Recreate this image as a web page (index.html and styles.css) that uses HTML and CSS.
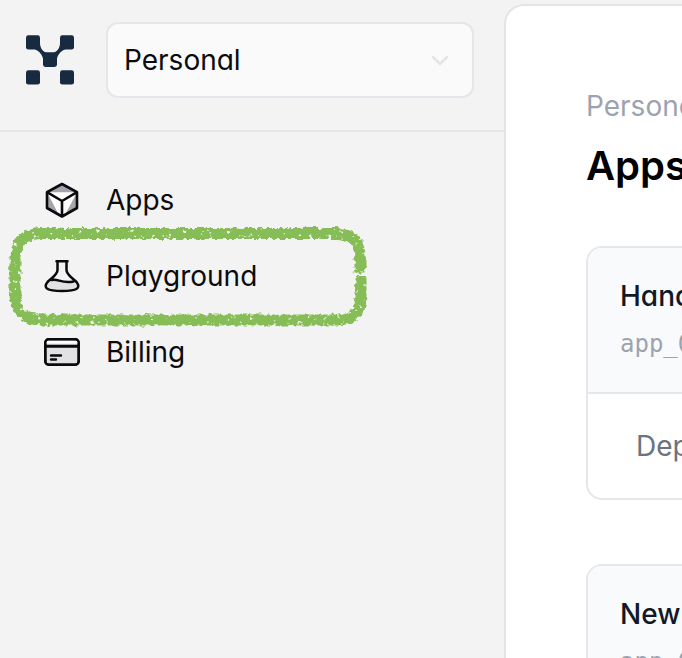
FILE: index.html
```html
<!DOCTYPE html>
<html lang="en">
<head>
<meta charset="utf-8">
<title>Apps</title>
<link rel="stylesheet" href="styles.css">
</head>
<body>
<div class="shell">
  <aside class="sidebar">
    <header class="top">
      <svg class="logo" viewBox="0 0 48 50" fill="#172a40">
        <rect x="0" y="0.300" width="14" height="14.300" rx="2.400"/>
        <rect x="34" y="0.300" width="14" height="14.300" rx="2.400"/>
        <rect x="17" y="17.600" width="14" height="14.300" rx="2.400"/>
        <rect x="0" y="35.300" width="14" height="14.300" rx="2.400"/>
        <rect x="34" y="35.300" width="14" height="14.300" rx="2.400"/>
        <path d="M14 8C14 12.500 16.500 17.300 21 17.500H27C31.500 17.300 34 12.500 34 8L39 14.500C35 15.800 32 19.500 31 23.500H17C16 19.500 13 15.800 9 14.500Z"/>
      </svg>
      <div class="select">
        <span>Personal</span>
        <svg class="chevron" viewBox="0 0 18 12" fill="none" stroke="#e4e5e7" stroke-width="2.600" stroke-linecap="round" stroke-linejoin="round"><path d="M2 3 9 10 16 3"/></svg>
      </div>
    </header>
    <nav class="nav">
      <a class="item">
        <svg class="icon" viewBox="0 0 36 36" stroke-linejoin="round">
          <path d="M18 2 33 10.200V26L18 34.500 3 26V10.200Z" fill="#fff"/>
          <path d="M18 2 33 10.200H3ZM3 10.200V26L15 33ZM33 10.200V26L21 33Z" fill="#a5a5ad"/>
          <path d="M18 2 33 10.200V26L18 34.500 3 26V10.200ZM3 10.200 18 19 33 10.200M18 19V34" fill="none" stroke="#0b0b0d" stroke-width="2.600"/>
        </svg>
        <span>Apps</span>
      </a>
      <a class="item">
        <svg class="icon" viewBox="0 0 36 36" fill="none" stroke="#0b0b0d" stroke-width="2.500" stroke-linecap="round" stroke-linejoin="round">
          <path d="M7 22.500C14 19 17 25.500 29 23.500L34 28C35 33 30 33 18 33S1 33 2 28Z" fill="#e2e2e5" stroke="none"/>
          <path d="M12.500 3.200H23.500M13.500 3.500V12C13.500 17 8 19.500 3.500 24C-1 30 2.500 33 18 33S37 30 32.500 24C28 19.500 22.500 17 22.500 12V3.500M7.500 22C14 20 17 26 29.500 23.500"/>
        </svg>
        <span>Playground</span>
      </a>
      <a class="item">
        <svg class="icon" viewBox="0 0 36 36" fill="none" stroke="#0b0b0d" stroke-width="2.400" stroke-linecap="round">
          <rect x="1.300" y="5.200" width="33.400" height="25.600" rx="3.500" fill="#e2e2e5"/>
          <path d="M2.400 8H33.600" stroke="#fff" stroke-width="3"/>
          <rect x="1.300" y="5.200" width="33.400" height="25.600" rx="3.500"/>
          <path d="M2 12.200H34" stroke-width="3"/>
          <path d="M7 21.500H17M7 25.500H12"/>
        </svg>
        <span>Billing</span>
      </a>
    </nav>
    <svg class="marker" viewBox="0 0 376 120">
      <filter id="brush" filterUnits="userSpaceOnUse" x="0" y="0" width="376" height="120" color-interpolation-filters="sRGB">
        <feTurbulence type="fractalNoise" baseFrequency="0.22" numOctaves="2" seed="8" result="n"/>
        <feDisplacementMap in="SourceGraphic" in2="n" scale="6.500" xChannelSelector="R" yChannelSelector="G" result="rough"/>
        <feColorMatrix in="n" type="matrix" values="0 0 0 0 0  0 0 0 0 0  0 0 0 0 0  0 0 -9 0 7" result="holes"/>
        <feComposite in="rough" in2="holes" operator="in"/>
      </filter>
      <path d="M360 56.500V42Q360 17.500 336 17.500H42Q15 17.500 15 44V79Q15 104 42 104H336Q361 104 361 80V60" fill="none" stroke="#87bd56" stroke-width="11" filter="url(#brush)"/>
    </svg>
  </aside>
  <main class="panel">
    <div class="crumb">Personal</div>
    <h1>Apps</h1>
    <section class="card">
      <div class="head"><h2>Hand</h2><code>app_0</code></div>
      <div class="body">Dep</div>
    </section>
    <section class="card">
      <div class="head"><h2>New</h2><code>app_0</code></div>
    </section>
  </main>
</div>
</body>
</html>
```
FILE: styles.css
```css
* { box-sizing: border-box; }
body {
  margin: 0;
  height: 658px;
  overflow: hidden;
  background: #f3f3f3;
  color: #0b0b0d;
  font: 28px/40px Inter, "Liberation Sans", sans-serif;
  font-feature-settings: "cv11";
}
.shell { display: flex; height: 658px; overflow: hidden; }
.sidebar { position: relative; flex: 0 0 504px; }
.top {
  display: flex;
  align-items: flex-start;
  height: 132px;
  padding: 22px 30px 0 26px;
  border-bottom: 2px solid #e5e5e6;
}
.logo { width: 48px; height: 50px; margin: 13px 32px 0 0; }
.select {
  flex: 1;
  display: flex;
  align-items: center;
  justify-content: space-between;
  height: 76px;
  padding: 0 23px 0 16px;
  border: 2px solid #e4e6eb;
  border-radius: 12px;
  background: #fafafa;
}
.chevron { width: 18px; height: 12px; }
.nav { padding: 30px 44px; }
.item { display: flex; align-items: center; gap: 26px; height: 76px; }
.icon { width: 36px; height: 36px; }
.marker {
  position: absolute;
  left: 0;
  top: 216px;
  width: 376px;
  height: 120px;
}
.panel {
  flex: 1;
  min-width: 0;
  height: 654px;
  margin-top: 4px;
  padding: 80px 0 0 80px;
  overflow: hidden;
  border: solid #e4e4e6;
  border-width: 2px 0 0 2px;
  border-radius: 20px 0 0 0;
  background: #fff;
}
.crumb { color: #9ca3af; }
h1 { margin: 16px 0 56px; font-size: 40px; line-height: 48px; font-weight: 600; color: #000; }
.card {
  width: 400px;
  height: 254px;
  margin-bottom: 64px;
  border: 2px solid #e5e7eb;
  border-radius: 16px;
  overflow: hidden;
}
.head {
  height: 146px;
  padding: 28px 32px;
  border-bottom: 2px solid #e5e7eb;
  background: #f9fafb;
}
h2 { margin: 0; font-size: 28px; line-height: 40px; font-weight: 500; color: #111827; }
code {
  display: block;
  margin-top: 8px;
  font: 24px/40px "DejaVu Sans Mono", monospace;
  color: #9ca3af;
}
.body { padding: 32px 48px; color: #6b7280; }
```
